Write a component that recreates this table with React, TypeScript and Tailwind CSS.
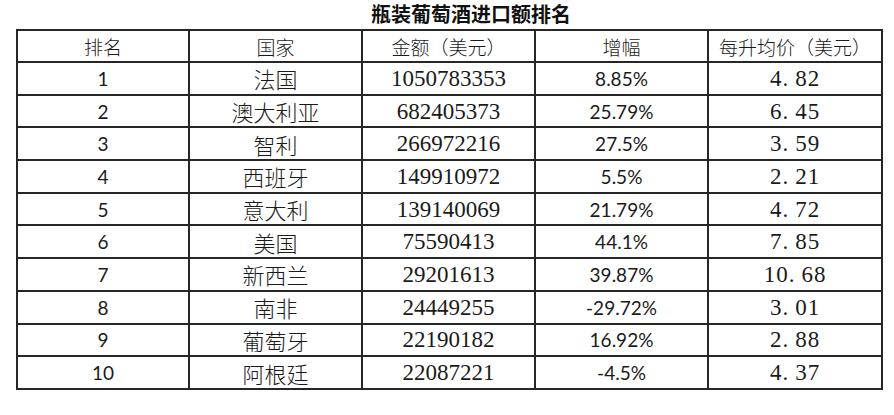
import React from "react";

const rows = [
  ["1", "法国", "1050783353", "8.85%", "4.82"],
  ["2", "澳大利亚", "682405373", "25.79%", "6.45"],
  ["3", "智利", "266972216", "27.5%", "3.59"],
  ["4", "西班牙", "149910972", "5.5%", "2.21"],
  ["5", "意大利", "139140069", "21.79%", "4.72"],
  ["6", "美国", "75590413", "44.1%", "7.85"],
  ["7", "新西兰", "29201613", "39.87%", "10.68"],
  ["8", "南非", "24449255", "-29.72%", "3.01"],
  ["9", "葡萄牙", "22190182", "16.92%", "2.88"],
  ["10", "阿根廷", "22087221", "-4.5%", "4.37"],
];

const cjk = "font-['Noto_Sans_CJK_SC',sans-serif]";
const cell = "border-2 border-[#262626] p-0 text-center align-middle leading-none";

function Price({ value }: { value: string }) {
  const [a, b] = value.split(".");
  return (
    <span className="font-['Liberation_Serif',serif] text-[23px] tracking-[1px]">
      {a}
      <span className="pr-[6px]">.</span>
      {b}
    </span>
  );
}

export default function App() {
  return (
    <div className="h-[415px] w-[894px] bg-white text-[#1a1a1a]">
      <div className="flex h-[29px] items-start justify-center pl-[48px] pt-[3px]">
        <h1 className={`${cjk} text-[20px] font-bold leading-[22px] text-[#111]`}>
          瓶装葡萄酒进口额排名
        </h1>
      </div>
      <table className="ml-[16px] w-[865px] table-fixed border-collapse">
        <colgroup>
          <col className="w-[172px]" />
          <col className="w-[173px]" />
          <col className="w-[173px]" />
          <col className="w-[173px]" />
          <col className="w-[174px]" />
        </colgroup>
        <thead>
          <tr className="h-[32px]">
            {["排名", "国家", "金额（美元）", "增幅", "每升均价（美元）"].map((h) => (
              <th key={h} className={`${cell} ${cjk} text-[19px] font-light`}>
                {h}
              </th>
            ))}
          </tr>
        </thead>
        <tbody>
          {rows.map((r) => (
            <tr key={r[0]} className="h-[32.7px]">
              <td className={`${cell} font-['Lato',sans-serif] text-[19px]`}>{r[0]}</td>
              <td className={`${cell} ${cjk} text-[22px] font-light`}>{r[1]}</td>
              <td className={`${cell} font-['Liberation_Serif',serif] text-[23px]`}>{r[2]}</td>
              <td className={`${cell} font-['Lato',sans-serif] text-[19px]`}>{r[3]}</td>
              <td className={cell}>
                <Price value={r[4]} />
              </td>
            </tr>
          ))}
        </tbody>
      </table>
    </div>
  );
}
